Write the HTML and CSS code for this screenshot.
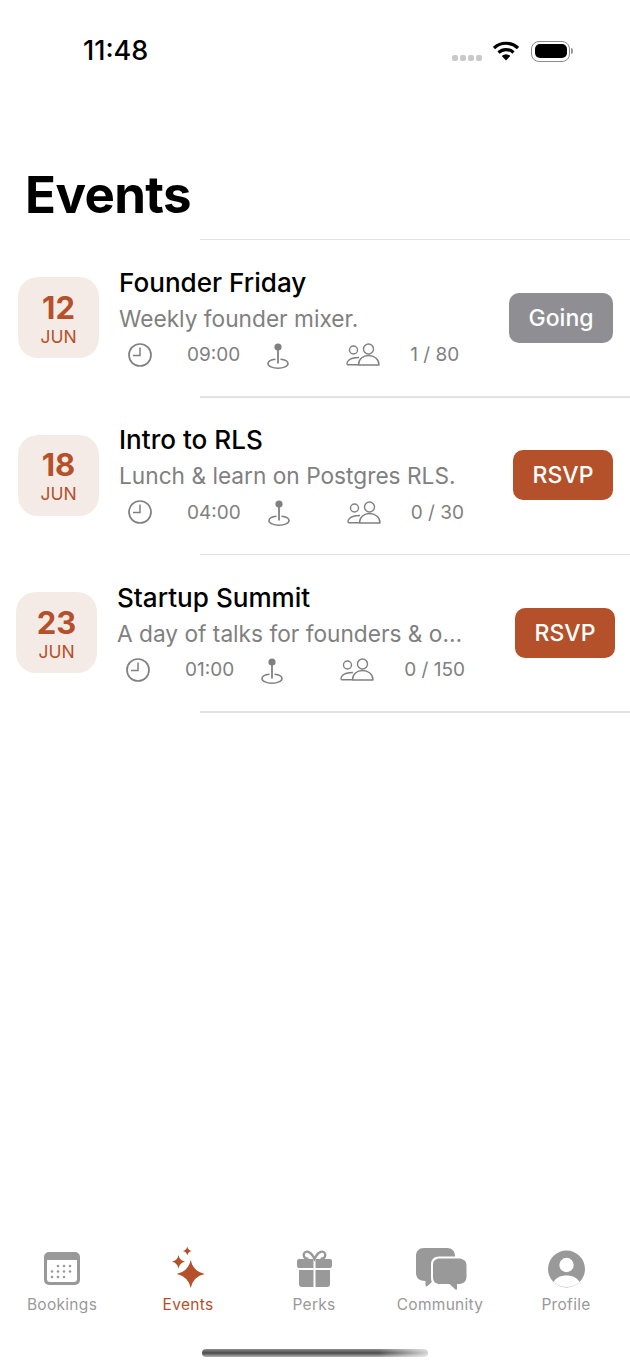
FILE: index.html
```html
<!DOCTYPE html>
<html lang="en">
<head>
    <meta charset="UTF-8">
    <meta name="viewport" content="width=device-width, initial-scale=1.0">
    <link rel="stylesheet" href="styles.css">
    <title>Events</title>
</head>
<body>
    <svg class="icon-defs" width="0" height="0">
        <defs>
            <symbol id="clock" viewBox="0 0 24 24">
                <circle cx="12" cy="12" r="11" fill="none" stroke="currentColor" stroke-width="1.7"/>
                <path d="M12 4.500V12.500H5" fill="none" stroke="currentColor" stroke-width="1.500"/>
            </symbol>
            <symbol id="pin" viewBox="0 0 22 27">
                <circle cx="11" cy="4" r="3.600" fill="currentColor"/>
                <path d="M11 6V20.500" fill="none" stroke="currentColor" stroke-width="1.800"/>
                <path d="M8.500 16.200C4 16.600 1 18.200 1 20.500C1 23.200 5.500 25.200 11 25.200C16.500 25.200 21 23.200 21 20.500C21 18.200 18 16.600 13.500 16.200" fill="none" stroke="currentColor" stroke-width="1.600"/>
            </symbol>
            <symbol id="people" viewBox="0 0 34 23">
                <circle cx="7.500" cy="7" r="4" fill="none" stroke="currentColor" stroke-width="1.400"/>
                <circle cx="22.500" cy="6" r="5" fill="none" stroke="currentColor" stroke-width="1.400"/>
                <path d="M12.500 22C12.500 16 17 12.500 22.500 12.500C28 12.500 33 16 33 22Z" fill="none" stroke="currentColor" stroke-width="1.400" stroke-linejoin="round"/>
                <path d="M12 21.800H2.500C0.500 21.800 0.500 19.500 2.500 17.500C4.500 15.500 8 14.500 13 14.500" fill="none" stroke="currentColor" stroke-width="1.400"/>
            </symbol>
        </defs>
    </svg>

    <div class="status-bar">
        <span class="status-time">11:48</span>
        <div class="status-icons">
            <div class="signal"><i></i><i></i><i></i><i></i></div>
            <svg class="wifi" width="26" height="20" viewBox="0 0 26 20">
                <path d="M1 7A17.500 17.500 0 0 1 25 7" fill="none" stroke="#000" stroke-width="3.200"/>
                <path d="M5.500 11.500A11 11 0 0 1 20.500 11.500" fill="none" stroke="#000" stroke-width="3.200"/>
                <path d="M8.800 15A5.800 5.800 0 0 1 17.200 15L13 19.500Z" fill="#000"/>
            </svg>
            <div class="battery"><div class="battery-fill"></div></div>
            <div class="battery-tip"></div>
        </div>
    </div>

    <h1 class="page-title">Events</h1>

    <div class="event-list">
        <div class="divider"></div>

        <div class="event-row">
            <div class="date-box">
                <div class="date-day">12</div>
                <div class="date-month">JUN</div>
            </div>
            <div class="event-body">
                <div class="event-title">Founder Friday</div>
                <div class="event-desc">Weekly founder mixer.</div>
                <div class="event-meta">
                    <svg class="meta-clock"><use href="#clock"/></svg>
                    <span class="meta-time">09:00</span>
                    <svg class="meta-pin"><use href="#pin"/></svg>
                    <svg class="meta-people"><use href="#people"/></svg>
                    <span class="meta-count">1 / 80</span>
                </div>
            </div>
            <div class="event-button going">Going</div>
        </div>
        <div class="divider"></div>

        <div class="event-row">
            <div class="date-box">
                <div class="date-day">18</div>
                <div class="date-month">JUN</div>
            </div>
            <div class="event-body">
                <div class="event-title">Intro to RLS</div>
                <div class="event-desc">Lunch &amp; learn on Postgres RLS.</div>
                <div class="event-meta">
                    <svg class="meta-clock"><use href="#clock"/></svg>
                    <span class="meta-time">04:00</span>
                    <svg class="meta-pin"><use href="#pin"/></svg>
                    <svg class="meta-people"><use href="#people"/></svg>
                    <span class="meta-count">0 / 30</span>
                </div>
            </div>
            <div class="event-button">RSVP</div>
        </div>
        <div class="divider"></div>

        <div class="event-row event-row-wide">
            <div class="date-box">
                <div class="date-day">23</div>
                <div class="date-month">JUN</div>
            </div>
            <div class="event-body">
                <div class="event-title">Startup Summit</div>
                <div class="event-desc">A day of talks for founders &amp; o…</div>
                <div class="event-meta">
                    <svg class="meta-clock"><use href="#clock"/></svg>
                    <span class="meta-time">01:00</span>
                    <svg class="meta-pin"><use href="#pin"/></svg>
                    <svg class="meta-people"><use href="#people"/></svg>
                    <span class="meta-count">0 / 150</span>
                </div>
            </div>
            <div class="event-button">RSVP</div>
        </div>
        <div class="divider"></div>
    </div>

    <div class="tab-bar">
        <div class="tab">
            <svg class="tab-icon" viewBox="0 0 56 44">
                <rect x="10" y="6" width="36" height="33" rx="5" fill="#999"/>
                <path d="M13 14H43V33A3 3 0 0 1 40 36H16A3 3 0 0 1 13 33Z" fill="#fff"/>
                <g fill="#999">
                    <circle cx="24" cy="20" r="1.300"/><circle cx="30" cy="20" r="1.300"/><circle cx="36" cy="20" r="1.300"/>
                    <circle cx="18" cy="25.500" r="1.300"/><circle cx="24" cy="25.500" r="1.300"/><circle cx="30" cy="25.500" r="1.300"/><circle cx="36" cy="25.500" r="1.300"/>
                    <circle cx="18" cy="31" r="1.300"/><circle cx="24" cy="31" r="1.300"/><circle cx="30" cy="31" r="1.300"/>
                </g>
            </svg>
            <span class="tab-label">Bookings</span>
        </div>
        <div class="tab tab-active">
            <svg class="tab-icon" viewBox="0 0 56 44">
                <g fill="#b5512a">
                    <path d="M30.700 14Q33.200 25.500 44.700 28Q33.200 30.500 30.700 42Q28.200 30.500 16.700 28Q28.200 25.500 30.700 14Z"/>
                    <path d="M18.500 9Q19.600 14.600 25 15.700Q19.600 16.800 18.500 22.400Q17.400 16.800 12 15.700Q17.400 14.600 18.500 9Z"/>
                    <path d="M27.300 0.500Q28.100 4.200 31.800 5Q28.100 5.800 27.300 9.500Q26.500 5.800 22.800 5Q26.500 4.200 27.300 0.500Z"/>
                </g>
            </svg>
            <span class="tab-label">Events</span>
        </div>
        <div class="tab">
            <svg class="tab-icon" viewBox="0 0 56 44">
                <path d="M22.500 13C18 13 17 9.500 18 7.500C19.500 4.500 24.500 4.500 28.500 13C32.500 4.500 37.500 4.500 39 7.500C40 9.500 39 13 34.500 13" fill="none" stroke="#999" stroke-width="2.400"/>
                <path d="M13 13H27.500V22H13A2 2 0 0 1 11 20V15A2 2 0 0 1 13 13ZM29.500 13H44A2 2 0 0 1 46 15V20A2 2 0 0 1 44 22H29.500Z" fill="#999"/>
                <path d="M13 24H27.500V41H16A3 3 0 0 1 13 38ZM29.500 24H44V38A3 3 0 0 1 41 41H29.500Z" fill="#999"/>
            </svg>
            <span class="tab-label">Perks</span>
        </div>
        <div class="tab">
            <svg class="tab-icon" viewBox="0 0 56 44">
                <path d="M12 2H35C40 2 43 5 43 10V27C43 32 40 35 35 35H21L15.500 40C14.500 40.800 13.500 40.300 13.500 39V35C7.500 35 4 32 4 27V10C4 5 7 2 12 2Z" fill="#999"/>
                <path d="M27 10.500H47C52.500 10.500 56 13.500 56 18.500V32C56 37 52.500 40 47 40H46.500V45.500L39.500 40H27C22 40 19 37 19 32V18.500C19 13.500 22 10.500 27 10.500Z" fill="#fff"/>
                <path d="M28 12.500H46.500C51 12.500 54.500 14.500 54.500 19.500V31C54.500 35.500 51 38 46.500 38H45V43C45 43.800 44.200 44 43.500 43.500L37.500 38H28C23.500 38 21 35.500 21 31V19.500C21 14.500 23.500 12.500 28 12.500Z" fill="#999"/>
            </svg>
            <span class="tab-label">Community</span>
        </div>
        <div class="tab">
            <svg class="tab-icon" viewBox="0 0 56 44">
                <circle cx="28.500" cy="23" r="18.500" fill="#999"/>
                <circle cx="28.500" cy="19" r="7.200" fill="#fff"/>
                <path d="M15.500 36C18 31.500 23 29.500 28.500 29.500C34 29.500 39 31.500 41.500 36C38 39.500 33.500 41 28.500 41C23.500 41 19 39.500 15.500 36Z" fill="#fff"/>
            </svg>
            <span class="tab-label">Profile</span>
        </div>
    </div>

    <div class="home-bar"><div class="home-indicator"></div></div>
</body>
</html>
```

FILE: styles.css
```css
* {
    box-sizing: border-box;
}

body {
    margin: 0;
    width: 630px;
    height: 1370px;
    overflow: hidden;
    display: flex;
    flex-direction: column;
    background-color: #fff;
    color: #000;
    font-family: Inter, "Noto Sans", sans-serif;
}

.icon-defs {
    position: absolute;
}

/* status bar */
.status-bar {
    height: 102px;
    padding: 34px 57px 0 83px;
    display: flex;
    justify-content: space-between;
}

.status-time {
    font-size: 27px;
    line-height: 34px;
    font-weight: 500;
}

.status-icons {
    height: 34px;
    display: flex;
    align-items: center;
}

.signal {
    display: flex;
    gap: 2px;
    margin: 13px 11px 0 0;
}

.signal i {
    width: 6px;
    height: 6px;
    border-radius: 2px;
    background-color: #c9c9c9;
}

.wifi {
    margin-right: 12px;
}

.battery {
    width: 39px;
    height: 21px;
    padding: 2.500px;
    border: 1.500px solid #8c8c8c;
    border-radius: 8px;
}

.battery-fill {
    height: 100%;
    background-color: #000;
    border-radius: 5px;
}

.battery-tip {
    width: 2px;
    height: 6px;
    margin-left: 1px;
    background-color: #999;
    border-radius: 0 2px 2px 0;
}

.page-title {
    margin: 50px 0 0;
    padding-left: 25px;
    font-size: 51px;
    line-height: 86.500px;
    font-weight: 700;
    letter-spacing: -0.6px;
}

/* event list */
.event-list {
    flex: 1;
}

.divider {
    height: 1.500px;
    margin-left: 200px;
    background-color: #e2e2e2;
}

.event-row {
    height: 156px;
    padding: 0 17px 1px 18px;
    display: flex;
    align-items: center;
    gap: 20px;
}

.event-row-wide {
    padding: 0 15px 1px 16px;
}

.date-box {
    flex: none;
    width: 81px;
    height: 81px;
    padding-top: 2px;
    border-radius: 20px;
    background-color: #f5ebe6;
    color: #b5512a;
    display: flex;
    flex-direction: column;
    align-items: center;
    justify-content: center;
}

.date-day {
    font-size: 31px;
    line-height: 36px;
    font-weight: 700;
}

.date-month {
    font-size: 17.500px;
    line-height: 22px;
}

.event-body {
    flex: 1;
    min-width: 0;
    margin-top: 2px;
}

.event-title {
    font-size: 26.100px;
    line-height: 36px;
    font-weight: 500;
}

.event-desc {
    font-size: 22.700px;
    line-height: 36px;
    color: #808080;
    white-space: nowrap;
}

.event-meta {
    height: 36px;
    padding-left: 9px;
    display: flex;
    align-items: center;
    color: #808080;
    font-size: 19px;
}

.meta-clock {
    width: 24px;
    height: 24px;
    margin-right: 35px;
}

.meta-pin {
    width: 22px;
    height: 27px;
    margin: 3px 57px 0 27px;
}

.meta-people {
    width: 34px;
    height: 23px;
    margin-right: 30px;
}

.event-button {
    flex: none;
    width: 100px;
    height: 50px;
    border-radius: 10px;
    background-color: #b5512a;
    color: #fff;
    font-size: 23px;
    font-weight: 500;
    display: flex;
    align-items: center;
    justify-content: center;
}

.going {
    width: 104px;
    background-color: #8e8e93;
}

/* tab bar */
.tab-bar {
    display: flex;
    margin-left: -1px;
    padding-bottom: 34px;
}

.tab {
    width: 126px;
    display: flex;
    flex-direction: column;
    align-items: center;
    color: #999;
}

.tab-active {
    color: #b5512a;
}

.tab-icon {
    width: 56px;
    height: 44px;
    overflow: visible;
}

.tab-label {
    margin-top: 5px;
    font-size: 15.500px;
    line-height: 20px;
    letter-spacing: 0.3px;
}

.home-bar {
    height: 21px;
    display: flex;
    justify-content: center;
}

.home-indicator {
    width: 226px;
    height: 8px;
    border-radius: 4px;
    background: linear-gradient(to right, transparent 78%, rgba(255, 255, 255, 0.75) 100%),
        linear-gradient(to bottom, #8f8f8f, #4a4a4a 50%, #b5b5b5);
}
```
